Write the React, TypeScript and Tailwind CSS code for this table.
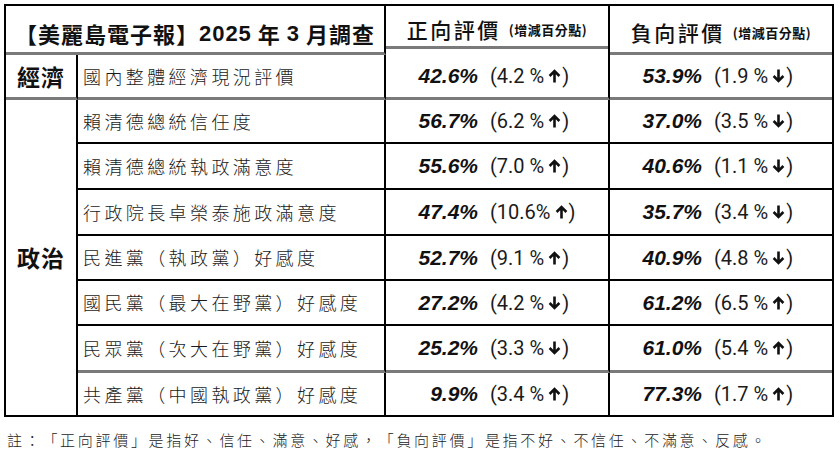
import React from 'react';

type Trend = 'up' | 'down';

interface Item {
  label: string;
  pos: string;
  posDelta: string;
  posTrend: Trend;
  neg: string;
  negDelta: string;
  negTrend: Trend;
}

const economy: Item = {
  label: '國內整體經濟現況評價',
  pos: '42.6%',
  posDelta: '4.2 %',
  posTrend: 'up',
  neg: '53.9%',
  negDelta: '1.9 %',
  negTrend: 'down',
};

const politics: Item[] = [
  { label: '賴清德總統信任度', pos: '56.7%', posDelta: '6.2 %', posTrend: 'up', neg: '37.0%', negDelta: '3.5 %', negTrend: 'down' },
  { label: '賴清德總統執政滿意度', pos: '55.6%', posDelta: '7.0 %', posTrend: 'up', neg: '40.6%', negDelta: '1.1 %', negTrend: 'down' },
  { label: '行政院長卓榮泰施政滿意度', pos: '47.4%', posDelta: '10.6%', posTrend: 'up', neg: '35.7%', negDelta: '3.4 %', negTrend: 'down' },
  { label: '民進黨（執政黨）好感度', pos: '52.7%', posDelta: '9.1 %', posTrend: 'up', neg: '40.9%', negDelta: '4.8 %', negTrend: 'down' },
  { label: '國民黨（最大在野黨）好感度', pos: '27.2%', posDelta: '4.2 %', posTrend: 'down', neg: '61.2%', negDelta: '6.5 %', negTrend: 'up' },
  { label: '民眾黨（次大在野黨）好感度', pos: '25.2%', posDelta: '3.3 %', posTrend: 'down', neg: '61.0%', negDelta: '5.4 %', negTrend: 'up' },
  { label: '共產黨（中國執政黨）好感度', pos: '9.9%', posDelta: '3.4 %', posTrend: 'up', neg: '77.3%', negDelta: '1.7 %', negTrend: 'up' },
];

const cjk = "font-['Noto_Sans_CJK_TC','Noto_Sans_CJK_SC',sans-serif] [text-spacing-trim:space-all]";

const Arrow = ({ trend }: { trend: Trend }) => (
  <svg width="13" height="14" viewBox="0 0 13 14" className="ml-[4px] mr-[1px] inline-block">
    {trend === 'up' ? (
      <path d="M6.5 13.5V2.2M1.6 7L6.5 2.1L11.4 7" fill="none" stroke="#111" strokeWidth="2.6" />
    ) : (
      <path d="M6.5 0.5V11.8M1.6 7L6.5 11.9L11.4 7" fill="none" stroke="#111" strokeWidth="2.6" />
    )}
  </svg>
);

const Value = ({ value, delta, trend, border, last }: { value: string; delta: string; trend: Trend; border: string; last?: boolean }) => (
  <div className={`flex items-center pl-[28px] ${border} ${last ? '' : 'border-r-2 border-r-black'}`}>
    <span className="w-[64px] text-right font-['Liberation_Sans',Arial,sans-serif] text-[21px] font-bold italic text-[#111]">
      {value}
    </span>
    <span className="ml-[12px] flex items-center font-['Roboto','Liberation_Sans',sans-serif] text-[20px] text-[#1a1a1a]">
      ({delta}
      <Arrow trend={trend} />)
    </span>
  </div>
);

const Label = ({ text, border }: { text: string; border: string }) => (
  <div className={`flex items-center border-r-2 border-r-black pl-[5px] ${cjk} text-[18px] font-light tracking-[3.4px] text-[#1a1a1a] ${border}`}>
    {text}
  </div>
);

const Header = ({ text }: { text: string }) => (
  <div className={`flex items-center justify-center pt-[8px] ${cjk} border-b-[3px] border-b-[#7a7a7a]`}>
    <span className="text-[21px] font-medium tracking-[2.5px] text-[#111]">{text}</span>
    <span className="ml-[8px] text-[13px] font-bold tracking-[0.5px] text-[#111]">(增減百分點)</span>
  </div>
);

export default function App() {
  return (
    <div className="h-[454px] w-[840px] overflow-hidden bg-white">
      <div className="ml-[4px] mt-[4px] grid w-[830px] grid-cols-[72px_308px_224px_222px] grid-rows-[49px_45px_44px_46px_46px_45px_45px_47px_42px] border-2 border-black">
        <div className={`col-span-2 flex items-center justify-center border-r-2 border-r-black border-b-[3px] border-b-[#7a7a7a] pt-[8px] ${cjk} text-[22px] font-bold tracking-[1px] text-[#111]`}>
          【美麗島電子報】<span className="font-['Liberation_Sans',Arial,sans-serif]">2025</span>&nbsp;年&nbsp;<span className="font-['Liberation_Sans',Arial,sans-serif]">3</span>&nbsp;月調查
        </div>
        <div className="border-r-2 border-r-black">
          <Header text="正向評價" />
        </div>
        <Header text="負向評價" />

        <div className={`flex items-center justify-center border-r-2 border-r-black border-b-[3px] border-b-[#7a7a7a] ${cjk} text-[23px] font-bold tracking-[1px] text-[#111]`}>
          經濟
        </div>
        <Label text={economy.label} border="border-b-[3px] border-b-[#7a7a7a]" />
        <Value value={economy.pos} delta={economy.posDelta} trend={economy.posTrend} border="border-b-[3px] border-b-[#7a7a7a]" />
        <Value value={economy.neg} delta={economy.negDelta} trend={economy.negTrend} border="border-b-[3px] border-b-[#7a7a7a]" last />

        <div className={`row-span-7 flex items-center justify-center border-r-2 border-r-black ${cjk} text-[23px] font-bold tracking-[1px] text-[#111]`}>
          政治
        </div>
        {politics.map((item, i) => {
          const border =
            i === politics.length - 1
              ? ''
              : i === politics.length - 2
                ? 'border-b-[3px] border-b-[#7a7a7a]'
                : 'border-b-2 border-b-black';
          return (
            <React.Fragment key={item.label}>
              <Label text={item.label} border={border} />
              <Value value={item.pos} delta={item.posDelta} trend={item.posTrend} border={border} />
              <Value value={item.neg} delta={item.negDelta} trend={item.negTrend} border={border} last />
            </React.Fragment>
          );
        })}
      </div>
      <p className={`ml-[7px] mt-[12px] ${cjk} text-[15px] font-light tracking-[2.7px] text-[#222]`}>
        註：「正向評價」是指好、信任、滿意、好感，「負向評價」是指不好、不信任、不滿意、反感。
      </p>
    </div>
  );
}
